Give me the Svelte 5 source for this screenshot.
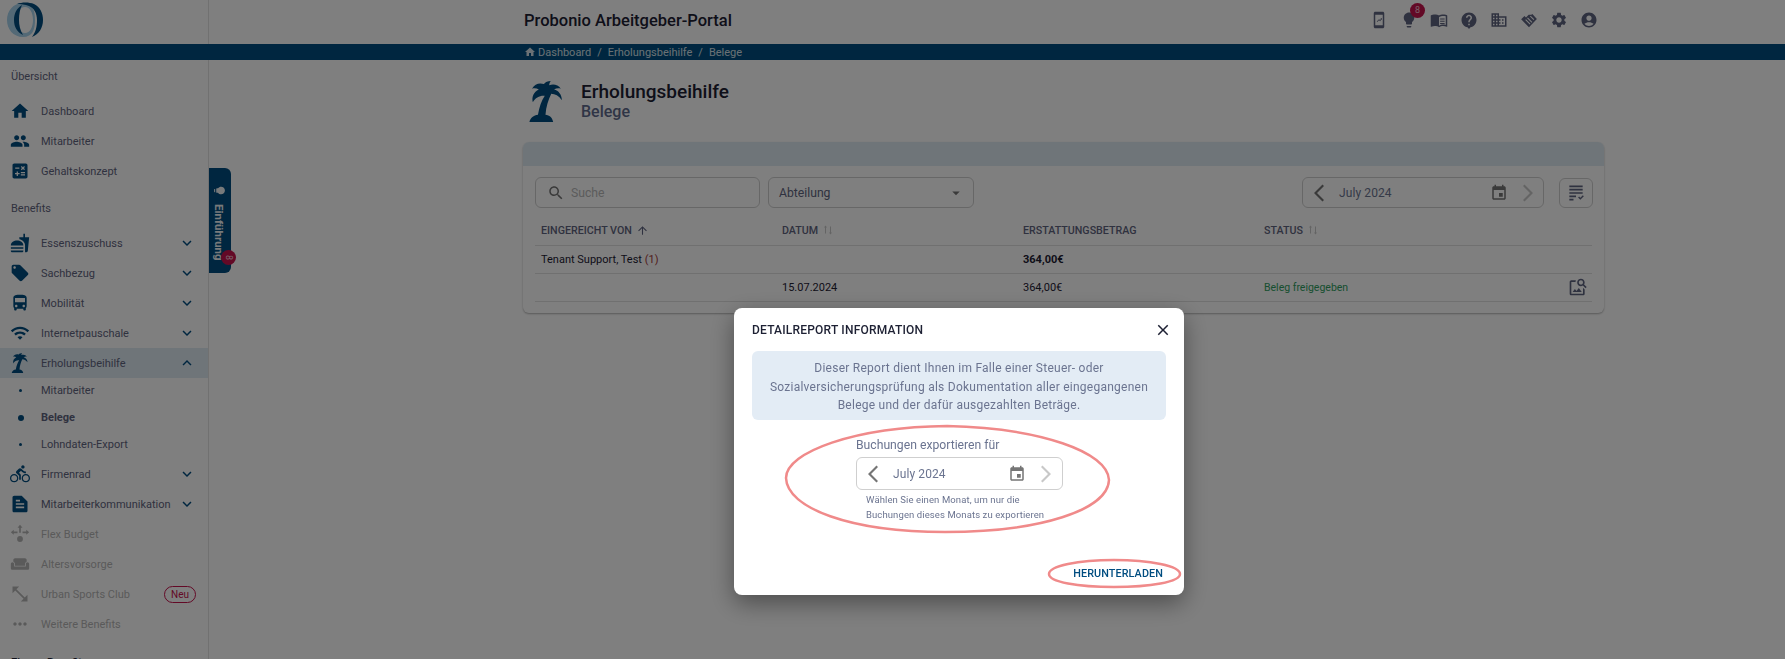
<script>
  const icons = {
    home: 'M10 20v-6h4v6h5v-8h3L12 3 2 12h3v8z',
    people: 'M16 11c1.66 0 2.99-1.34 2.99-3S17.66 5 16 5c-1.66 0-3 1.34-3 3s1.34 3 3 3zm-8 0c1.66 0 2.99-1.34 2.99-3S9.66 5 8 5C6.34 5 5 6.34 5 8s1.34 3 3 3zm0 2c-2.33 0-7 1.17-7 3.5V19h14v-2.5c0-2.33-4.67-3.5-7-3.5zm8 0c-.29 0-.62.02-.97.05 1.16.84 1.97 1.97 1.97 3.45V19h6v-2.5c0-2.33-4.67-3.5-7-3.5z',
    calc: 'M19 3H5c-1.1 0-2 .9-2 2v14c0 1.1.9 2 2 2h14c1.1 0 2-.9 2-2V5c0-1.1-.9-2-2-2zm-5.97 4.06L14.09 6l1.41 1.41L16.91 6l1.06 1.06-1.41 1.41 1.41 1.41-1.06 1.06-1.41-1.4-1.41 1.41-1.06-1.06 1.41-1.41-1.41-1.42zm-6.78.66h5v1.5h-5v-1.5zM11.5 16h-2v2H8v-2H6v-1.5h2v-2h1.5v2h2V16zm6.5 1.25h-5v-1.5h5v1.5zm0-2.5h-5v-1.5h5v1.5z',
    food: 'M18.06 22.99h1.66c.84 0 1.53-.64 1.63-1.46L23 5.05h-5V1h-1.97v4.05h-4.97l.3 2.34c1.71.47 3.31 1.32 4.27 2.26 1.44 1.42 2.43 2.89 2.43 5.29v8.05zM1 21.99V21h15.03v.99c0 .55-.45 1-1.01 1H2.01c-.56 0-1.01-.45-1.01-1zm15.03-7c0-8-15.03-8-15.03 0h15.03zM1.02 17h15v2h-15z',
    tag: 'M21.41 11.58l-9-9C12.05 2.22 11.55 2 11 2H4c-1.1 0-2 .9-2 2v7c0 .55.22 1.05.59 1.42l9 9c.36.36.86.58 1.41.58.55 0 1.05-.22 1.41-.59l7-7c.37-.36.59-.86.59-1.41 0-.55-.23-1.06-.59-1.42zM5.5 7C4.67 7 4 6.33 4 5.5S4.67 4 5.5 4 7 4.67 7 5.5 6.33 7 5.5 7z',
    bus: 'M4 16c0 .88.39 1.67 1 2.22V20c0 .55.45 1 1 1h1c.55 0 1-.45 1-1v-1h8v1c0 .55.45 1 1 1h1c.55 0 1-.45 1-1v-1.78c.61-.55 1-1.34 1-2.22V6c0-3.5-3.58-4-8-4s-8 .5-8 4v10zm3.5 1c-.83 0-1.5-.67-1.5-1.5S6.67 14 7.5 14s1.5.67 1.5 1.5S8.33 17 7.5 17zm9 0c-.83 0-1.5-.67-1.5-1.5s.67-1.5 1.5-1.5 1.5.67 1.5 1.5-.67 1.5-1.5 1.5zm1.5-6H6V6h12v5z',
    wifi: 'M1 9l2 2c4.97-4.97 13.03-4.97 18 0l2-2C16.93 2.93 7.08 2.93 1 9zm8 8l3 3 3-3c-1.65-1.66-4.34-1.66-6 0zm-4-4l2 2c2.76-2.76 7.24-2.76 10 0l2-2C15.14 9.14 8.87 9.14 5 13z',
    palm: 'M2 24c.5-2.500 2.500-4 5-4.300.8-4.300 2-8 4-11-2.800-.3-5.500 1-7 3.800-.8-3.200.5-6 3.500-7.500-1.200-.8-2.700-1-4-.5 1.500-2.700 4.300-3.700 7-2.700.8-1.300 2.300-1.600 4-1.800-.6.800-.9 1.600-.9 2.500 2.500-1 5.200-.3 6.800 2-1.500-.4-2.800-.2-4 .5 2.700.6 4.500 3 4.600 6.200-1.800-2.500-4-3.600-6.200-3.700-1.800 3.500-3 7.500-3.400 12.200 2.300.2 4 1.600 4.500 4.300z',
    bike: 'M15.5 5.5c1.1 0 2-.9 2-2s-.9-2-2-2-2 .9-2 2 .9 2 2 2zM5 12c-2.8 0-5 2.2-5 5s2.2 5 5 5 5-2.2 5-5-2.2-5-5-5zm0 8.5c-1.9 0-3.5-1.6-3.5-3.5s1.6-3.5 3.5-3.5 3.5 1.6 3.5 3.5-1.6 3.5-3.5 3.5zm5.8-10l2.4-2.4.8.8c1.3 1.3 3 2.1 5.1 2.1V9c-1.5 0-2.7-.6-3.6-1.5l-1.9-1.9c-.5-.4-1-.6-1.6-.6s-1.1.2-1.4.6L7.8 8.4c-.4.4-.6.9-.6 1.4 0 .6.2 1.1.6 1.4L11 14v5h2v-6.2l-2.2-2.3zM19 12c-2.8 0-5 2.2-5 5s2.2 5 5 5 5-2.2 5-5-2.2-5-5-5zm0 8.5c-1.9 0-3.5-1.6-3.5-3.5s1.6-3.5 3.5-3.5 3.5 1.6 3.5 3.5-1.6 3.5-3.5 3.5z',
    doc: 'M14 2H5c-1.1 0-2 .9-2 2v16c0 1.1.9 2 2 2h14c1.1 0 2-.9 2-2V9l-7-7zM7 7h5v2H7V7zm10 10H7v-2h10v2zm0-4H7v-2h10v2z',
    flex: 'M12 1l3 3.500h-2v6h-2v-6H9zM1 10l3.500-3v2h4.500v2H4.500v2zM23 10l-3.500-3v2H15v2h4.500v2zM12 14.500a3.500 3.500 0 1 0 0 7 3.500 3.500 0 0 0 0-7z',
    sofa: 'M21 10c-1.1 0-2 .9-2 2v3H5v-3c0-1.1-.9-2-2-2s-2 .9-2 2v5c0 1.1.9 2 2 2h18c1.1 0 2-.9 2-2v-5c0-1.1-.9-2-2-2zm-3-5H6c-1.1 0-2 .9-2 2v2.150c1.160.410 2 1.510 2 2.820V14h12v-2.030c0-1.300.840-2.400 2-2.820V7c0-1.100-.900-2-2-2z',
    sports: 'M3 11V3h8L7.710 6.290l10 10L21 13v8h-8l3.290-3.290-10-10z',
    more: 'M6 10c-1.1 0-2 .9-2 2s.9 2 2 2 2-.9 2-2-.9-2-2-2zm12 0c-1.1 0-2 .9-2 2s.9 2 2 2 2-.9 2-2-.9-2-2-2zm-6 0c-1.1 0-2 .9-2 2s.9 2 2 2 2-.9 2-2-.9-2-2-2z',
    down: 'M16.590 8.590L12 13.170 7.410 8.590 6 10l6 6 6-6z',
    up: 'M12 8l-6 6 1.410 1.410L12 10.830l4.590 4.580L18 14z',
    bulb: 'M9 21c0 .55.45 1 1 1h4c.55 0 1-.45 1-1v-1H9v1zm3-19C8.140 2 5 5.140 5 9c0 2.380 1.190 4.470 3 5.740V17c0 .55.45 1 1 1h6c.55 0 1-.45 1-1v-2.260c1.810-1.270 3-3.360 3-5.740 0-3.860-3.140-7-7-7z',
    book: 'M21 5c-1.110-.35-2.330-.5-3.500-.5-1.950 0-4.050.4-5.500 1.500-1.450-1.100-3.550-1.500-5.500-1.500S2.450 4.900 1 6v14.650c0 .25.25.5.5.5.1 0 .15-.05.25-.05C3.100 20.450 5.050 20 6.500 20c1.950 0 4.050.4 5.500 1.500 1.350-.85 3.800-1.500 5.500-1.500 1.650 0 3.350.3 4.750 1.050.1.05.15.05.25.05.25 0 .5-.25.5-.5V6c-.6-.45-1.250-.75-2-1zm0 13.500c-1.100-.35-2.300-.5-3.500-.5-1.700 0-4.150.65-5.500 1.500V8c1.350-.85 3.800-1.500 5.500-1.500 1.200 0 2.400.15 3.500.5v11.500zM13.500 10h6v1.300h-6zm0 3h6v1.300h-6zm0 3h6v1.300h-6z',
    help: 'M12 2C6.480 2 2 6.480 2 12c0 4.800 3.400 8.800 8 9.800L12 24l2-2.200c4.600-1 8-5 8-9.800 0-5.520-4.480-10-10-10zm1 17h-2v-2h2v2zm2.070-7.750l-.9.92C13.450 12.900 13 13.500 13 15h-2v-.5c0-1.100.45-2.100 1.170-2.830l1.240-1.260c.37-.36.59-.86.59-1.410 0-1.100-.9-2-2-2s-2 .9-2 2H8c0-2.210 1.790-4 4-4s4 1.790 4 4c0 .88-.36 1.680-.93 2.250z',
    domain: 'M12 7V3H2v18h20V7H12zM6 19H4v-2h2v2zm0-4H4v-2h2v2zm0-4H4V9h2v2zm0-4H4V5h2v2zm4 12H8v-2h2v2zm0-4H8v-2h2v2zm0-4H8V9h2v2zm0-4H8V5h2v2zm10 12h-8v-2h2v-2h-2v-2h2v-2h-2V9h8v10zm-2-8h-2v2h2v-2zm0 4h-2v2h2v-2z',
    shake: 'M12 21.500L1.500 11 6 6.500l2 2 3.500-3.500H15l1.500-1 6 6.500zM9.500 9.500l6 6 1-1-6-6zm-2.500 2.500l6 6 1-1-6-6zm6-5l5 5 1-1-4.500-4.500z',
    gear: 'M19.140 12.940c.04-.3.06-.61.06-.94 0-.32-.02-.64-.07-.94l2.030-1.580c.18-.14.23-.41.12-.61l-1.920-3.320c-.12-.22-.37-.29-.59-.22l-2.390.96c-.5-.38-1.030-.7-1.620-.94l-.36-2.540c-.04-.24-.24-.41-.48-.41h-3.840c-.24 0-.43.17-.47.41l-.36 2.540c-.59.24-1.130.57-1.620.94l-2.390-.96c-.22-.08-.47 0-.59.22L2.740 8.870c-.12.21-.08.47.12.61l2.030 1.580c-.05.3-.09.63-.09.94s.02.64.07.94l-2.030 1.580c-.18.14-.23.41-.12.61l1.920 3.320c.12.22.37.29.59.22l2.390-.96c.5.38 1.030.7 1.620.94l.36 2.540c.05.24.24.41.48.41h3.840c.24 0 .44-.17.47-.41l.36-2.540c.59-.24 1.130-.56 1.620-.94l2.390.96c.22.08.47 0 .59-.22l1.920-3.320c.12-.22.07-.47-.12-.61l-2.010-1.580zM12 15.600c-1.980 0-3.600-1.620-3.600-3.600s1.620-3.600 3.600-3.600 3.600 1.620 3.600 3.600-1.620 3.600-3.600 3.600z',
    account: 'M12 2C6.480 2 2 6.480 2 12s4.480 10 10 10 10-4.480 10-10S17.520 2 12 2zm0 4c1.930 0 3.500 1.570 3.500 3.500S13.930 13 12 13s-3.500-1.570-3.500-3.500S10.070 6 12 6zm0 14c-2.030 0-4.430-.82-6.140-2.880C7.550 15.800 9.680 15 12 15s4.450.8 6.140 2.120C16.430 19.180 14.030 20 12 20z',
    phone: 'M17 1.010L7 1c-1.100 0-2 .9-2 2v18c0 1.100.9 2 2 2h10c1.100 0 2-.9 2-2V3c0-1.100-.9-1.990-2-1.990zM17 19H7V5h10v14zM9 14l3-3 1.500 1 1.500-2h-1.500v-.5H16V12h-.5v-1.200L13.600 13.500 12 12.400 9.700 14.700z',
    search: 'M15.500 14h-.79l-.28-.27C15.410 12.590 16 11.110 16 9.500 16 5.910 13.090 3 9.500 3S3 5.910 3 9.500 5.910 16 9.500 16c1.610 0 3.090-.59 4.230-1.570l.27.28v.79l5 4.990L20.490 19l-4.990-5zm-6 0C7.010 14 5 11.990 5 9.500S7.010 5 9.500 5 14 7.010 14 9.500 11.990 14 9.500 14z',
    event: 'M17 12h-5v5h5v-5zM16 1v2H8V1H6v2H5c-1.110 0-1.990.9-1.990 2L3 19c0 1.100.89 2 2 2h14c1.100 0 2-.9 2-2V5c0-1.100-.9-2-2-2h-1V1h-2zm3 18H5V8h14v11z',
    arrowUp: 'M4 12l1.410 1.410L11 7.830V20h2V7.830l5.580 5.590L20 12l-8-8-8 8z',
    close: 'M19 6.410L17.590 5 12 10.590 6.410 5 5 6.410 10.590 12 5 17.590 6.410 19 12 13.410 17.590 19 19 17.590 13.410 12z',
    checklist: 'M4 3h16v2H4zm0 4h16v2H4zm0 4h16v2H4zm0 4h8v2H4zm0 4h5v2H4zm10.500-1.500l1.200-1.200 1.500 1.500 3-3 1.200 1.200-4.200 4.200z',
    imageSearch: 'M18 13v7H4V6h5.020c.05-.71.22-1.380.48-2H4c-1.100 0-2 .9-2 2v14c0 1.100.9 2 2 2h14c1.100 0 2-.9 2-2v-5l-2-2zm-1.500 5h-11l2.750-3.530 1.960 2.360 2.750-3.540zm2.800-9.110c.44-.7.7-1.510.7-2.390C20 4.010 17.990 2 15.500 2S11 4.010 11 6.500s2.010 4.500 4.490 4.500c.88 0 1.700-.26 2.390-.7L21 13.420 22.420 12 19.300 8.890zM15.500 9C14.120 9 13 7.880 13 6.500S14.120 4 15.500 4 18 5.120 18 6.500 16.880 9 15.500 9z',
    sortBoth: 'M7 3l3 4H8v12H6V7H4zM17 21l-3-4h2V5h2v12h2z',
    caret: 'M7 10l5 5 5-5z',
    prev: 'M15.500 3.500L7 12l8.500 8.500 1.500-1.500-7-7 7-7z',
    next: 'M8.500 3.500L17 12l-8.500 8.500L7 19l7-7-7-7z'
  }

  const overview = [
    { label: 'Dashboard', icon: 'home' },
    { label: 'Mitarbeiter', icon: 'people' },
    { label: 'Gehaltskonzept', icon: 'calc' }
  ]

  const benefitsTop = [
    { label: 'Essenszuschuss', icon: 'food', chevron: 'down' },
    { label: 'Sachbezug', icon: 'tag', chevron: 'down' },
    { label: 'Mobilität', icon: 'bus', chevron: 'down' },
    { label: 'Internetpauschale', icon: 'wifi', chevron: 'down' },
    { label: 'Erholungsbeihilfe', icon: 'palm', chevron: 'up', active: true }
  ]

  const subItems = [
    { label: 'Mitarbeiter' },
    { label: 'Belege', current: true },
    { label: 'Lohndaten-Export' }
  ]

  const benefitsBottom = [
    { label: 'Firmenrad', icon: 'bike', chevron: 'down' },
    { label: 'Mitarbeiterkommunikation', icon: 'doc', chevron: 'down' },
    { label: 'Flex Budget', icon: 'flex', off: true },
    { label: 'Altersvorsorge', icon: 'sofa', off: true },
    { label: 'Urban Sports Club', icon: 'sports', off: true, isNew: true },
    { label: 'Weitere Benefits', icon: 'more', off: true }
  ]

  const topIcons = ['phone', 'bulb', 'book', 'help', 'domain', 'shake', 'gear', 'account']
</script>

{#snippet icon(name, size = 24)}
  <svg class="icon" width={size} height={size} viewBox="0 0 24 24" fill="currentColor" aria-hidden="true">
    <path d={icons[name]} fill-rule="evenodd" />
  </svg>
{/snippet}

{#snippet navItem(item)}
  <div class="nav-item" class:active={item.active} class:off={item.off}>
    <span class="nav-icon">{@render icon(item.icon, 20)}</span>
    <span class="nav-label">{item.label}</span>
    {#if item.isNew}<span class="new">Neu</span>{/if}
    {#if item.chevron}<span class="nav-chevron">{@render icon(item.chevron, 18)}</span>{/if}
  </div>
{/snippet}

{#snippet monthPicker()}
  <div class="picker">
    <span class="prev">{@render icon('prev', 24)}</span>
    <span class="month">July 2024</span>
    <span class="cal">{@render icon('event', 18)}</span>
    <span class="next">{@render icon('next', 24)}</span>
  </div>
{/snippet}

<div class="page">
  <aside class="sidebar">
    <div class="logo">
      <svg width="40" height="38" viewBox="0 0 40 38" aria-hidden="true">
        <path d="M18 2C8 2 2 10 2 19s6 17 16 17 12-8 12-17S28 2 18 2zm2 4c5 0 8 6 8 13s-3 13-8 13-9-6-9-13 4-13 9-13z" fill="#a6d2ec" fill-rule="evenodd" />
        <path d="M12 3C17 1 24 1 29 3 35 6 38 12 38 19 38 27 34 33 27 36 31 31 32 25 32 19 32 12 29 7 24 5 20 3.500 16 3 12 3z" fill="#004d80" />
        <path d="M17 4C12 7 9 12 9 19 9 26 12 31 18 34 15 29 14 24 14 19 14 13 15 8 17 4z" fill="#004d80" />
      </svg>
    </div>
    <div class="side-bar-strip"></div>
    <div class="section first">Übersicht</div>
    {#each overview as item}
      {@render navItem(item)}
    {/each}
    <div class="section second">Benefits</div>
    {#each benefitsTop as item}
      {@render navItem(item)}
    {/each}
    {#each subItems as sub}
      <div class="sub-item" class:current={sub.current}>
        <span class="dot-wrap"><span class="dot"></span></span>
        <span>{sub.label}</span>
      </div>
    {/each}
    {#each benefitsBottom as item}
      {@render navItem(item)}
    {/each}
    <div class="section third">Eigene Benefits</div>
  </aside>

  <div class="main">
    <header class="topbar">
      <div class="brand">Probonio Arbeitgeber-Portal</div>
      <div class="top-icons">
        {#each topIcons as name}
          <span class="top-icon">
            {@render icon(name, 18)}
            {#if name === 'bulb'}<span class="bulb-badge">8</span>{/if}
          </span>
        {/each}
      </div>
    </header>
    <nav class="crumbs">
      <span class="crumb-home">{@render icon('home', 12)}</span>
      <span>Dashboard</span><span class="sep">/</span><span>Erholungsbeihilfe</span><span class="sep">/</span><span>Belege</span>
    </nav>

    <div class="content">
      <div class="title-row">
        <span class="title-icon">{@render icon('palm', 41)}</span>
        <div>
          <h1>Erholungsbeihilfe</h1>
          <h2>Belege</h2>
        </div>
      </div>

      <section class="card">
        <div class="card-head"></div>
        <div class="filters">
          <div class="field search">
            <span class="search-icon">{@render icon('search', 18)}</span>
            <span class="placeholder">Suche</span>
          </div>
          <div class="field select">
            <span>Abteilung</span>
            <span class="caret">{@render icon('caret', 18)}</span>
          </div>
          <div class="spacer"></div>
          <div class="picker-wide">{@render monthPicker()}</div>
          <div class="list-btn">{@render icon('checklist', 20)}</div>
        </div>

        <div class="table">
          <div class="row head">
            <div>EINGEREICHT VON <span class="sort strong">{@render icon('arrowUp', 13)}</span></div>
            <div>DATUM <span class="sort">{@render icon('sortBoth', 12)}</span></div>
            <div>ERSTATTUNGSBETRAG</div>
            <div>STATUS <span class="sort">{@render icon('sortBoth', 12)}</span></div>
          </div>
          <div class="row">
            <div>Tenant Support, Test <span class="count">(1)</span></div>
            <div></div>
            <div class="bold">364,00€</div>
            <div></div>
          </div>
          <div class="row">
            <div></div>
            <div>15.07.2024</div>
            <div>364,00€</div>
            <div class="ok">Beleg freigegeben</div>
            <span class="row-action">{@render icon('imageSearch', 20)}</span>
          </div>
        </div>
      </section>
    </div>
  </div>

  <button class="tour" type="button">
    <span class="tour-inner">
      <span class="tour-bulb">{@render icon('bulb', 13)}</span>
      <span>Einführung</span>
    </span>
    <span class="tour-badge">8</span>
  </button>
</div>

<div class="backdrop"></div>

<div class="dialog" role="dialog">
  <div class="dialog-head">
    <span class="dialog-title">DETAILREPORT INFORMATION</span>
    <span class="dialog-close">{@render icon('close', 18)}</span>
  </div>
  <div class="info">
    Dieser Report dient Ihnen im Falle einer Steuer- oder<br />
    Sozialversicherungsprüfung als Dokumentation aller eingegangenen<br />
    Belege und der dafür ausgezahlten Beträge.
  </div>
  <div class="export">
    <div class="export-label">Buchungen exportieren für</div>
    {@render monthPicker()}
    <div class="hint">Wählen Sie einen Monat, um nur die<br />Buchungen dieses Monats zu exportieren</div>
  </div>
  <div class="dialog-foot">
    <span class="download">HERUNTERLADEN</span>
  </div>
</div>

<!-- rote Markierungen aus dem Screenshot -->
<svg class="marks" width="1785" height="659" aria-hidden="true">
  <path d="M947 426C1040 428 1108 452 1109 480 1108 510 1040 532 945 532 850 532 787 508 786 478 786 452 855 427 947 426z" />
  <path d="M1114 560C1150 560 1180 566 1180 574 1180 582 1150 587 1114 587 1078 587 1049 582 1049 574 1049 566 1078 560 1114 560z" />
</svg>

<style>
  :global(body) {
    margin: 0;
    overflow: hidden;
    background: #fff;
  }

  .page,
  .dialog {
    font-family: Roboto, 'Noto Sans', sans-serif;
  }

  .page {
    position: relative;
    display: flex;
    height: 659px;
    overflow: hidden;
    background: #fff;
    color: #2e3550;
  }

  .icon {
    display: block;
  }

  /* sidebar */
  .sidebar {
    flex: 0 0 208px;
    height: 659px;
    overflow: hidden;
    border-right: 1px solid #e2e2e2;
    font-size: 11px;
    color: #5f6480;
  }

  .logo {
    height: 44px;
    padding: 1px 0 0 5px;
    box-sizing: border-box;
  }

  .side-bar-strip {
    height: 16px;
    background: #004d80;
  }

  .section {
    font-size: 11px;
    line-height: 14px;
    padding-left: 11px;
    color: #5f6480;
  }

  .section.first {
    margin-top: 10px;
    margin-bottom: 12px;
  }

  .section.second {
    margin-top: 16px;
    margin-bottom: 12px;
  }

  .section.third {
    margin-top: 17px;
    font-weight: 500;
    color: #1d2033;
  }

  .nav-item {
    display: flex;
    align-items: center;
    height: 30px;
    padding-left: 10px;
    padding-right: 12px;
  }

  .nav-item.active {
    background: #dfeaf2;
  }

  .nav-icon {
    flex: 0 0 31px;
    color: #004d80;
  }

  .nav-label {
    flex: 1;
    white-space: nowrap;
  }

  .nav-chevron {
    color: #004d80;
  }

  .nav-item.off .nav-icon,
  .nav-item.off .nav-label {
    color: #b5b5b5;
  }

  .new {
    border: 1px solid #c7134d;
    border-radius: 9px;
    color: #c7134d;
    font-size: 10px;
    line-height: 15px;
    padding: 0 6px;
  }

  .sub-item {
    display: flex;
    align-items: center;
    box-sizing: border-box;
    height: 27px;
    padding: 0 0 2px 10px;
  }

  .sub-item.current {
    font-weight: 700;
  }

  .dot-wrap {
    flex: 0 0 31px;
    display: flex;
    justify-content: center;
    padding-right: 10px;
    box-sizing: border-box;
  }

  .dot {
    width: 3px;
    height: 3px;
    border-radius: 50%;
    background: #004d80;
  }

  .current .dot {
    width: 6px;
    height: 6px;
  }

  /* top */
  .main {
    flex: 1;
    min-width: 0;
    margin-left: -1px;
  }

  .topbar {
    display: flex;
    align-items: center;
    justify-content: space-between;
    box-sizing: border-box;
    height: 44px;
    padding: 0 186px 4px 316px;
    position: relative;
  }

  .brand {
    font-size: 16.500px;
    font-weight: 500;
    color: #1d2033;
  }

  .top-icons {
    display: flex;
    gap: 10px;
    color: #5f6480;
  }

  .top-icon {
    position: relative;
    width: 20px;
    display: flex;
    justify-content: center;
  }

  .bulb-badge {
    position: absolute;
    top: -8px;
    right: -6px;
    width: 15px;
    height: 15px;
    border-radius: 50%;
    background: #c7134d;
    color: #f2c4d4;
    font-size: 9px;
    line-height: 15px;
    text-align: center;
  }

  .crumbs {
    position: relative;
    display: flex;
    align-items: center;
    height: 16px;
    padding-left: 316px;
    background: #004d80;
    color: #d6e2ea;
    font-size: 11px;
  }

  .crumb-home {
    margin-right: 2px;
  }

  .sep {
    margin: 0 6px;
  }

  /* content */
  .content {
    padding: 0 181px 0 315px;
  }

  .title-row {
    display: flex;
    align-items: center;
    height: 82px;
    gap: 14px;
    padding-left: 3px;
  }

  .title-icon {
    color: #004d80;
  }

  h1,
  h2 {
    margin: 0;
    font-weight: 500;
  }

  h1 {
    font-size: 19px;
    line-height: 21px;
    color: #1d2033;
  }

  h2 {
    font-size: 16px;
    line-height: 19px;
    color: #5f6a8c;
  }

  .card {
    height: 171px;
    border-radius: 6px;
    box-shadow: 0 1px 2px rgba(0, 0, 0, 0.3);
    overflow: hidden;
  }

  .card-head {
    height: 24px;
    background: #dfeaf2;
  }

  .filters {
    display: flex;
    align-items: flex-start;
    gap: 8px;
    padding: 11px 11px 0 12px;
    height: 30px;
  }

  .field {
    display: flex;
    align-items: center;
    box-sizing: border-box;
    height: 31px;
    border: 1px solid #cfcfcf;
    border-radius: 6px;
    font-size: 12.200px;
    color: #5f6480;
  }

  .search {
    width: 225px;
    padding-left: 11px;
    gap: 6px;
  }

  .search-icon {
    color: #757575;
  }

  .placeholder {
    color: #b8b8b8;
  }

  .select {
    width: 206px;
    padding: 0 8px 0 10px;
    justify-content: space-between;
  }

  .caret {
    color: #757575;
  }

  .spacer {
    flex: 1;
  }

  .picker-wide {
    width: 242px;
  }

  .picker-wide .picker {
    height: 31px;
    padding-right: 3px;
  }

  .list-btn {
    box-sizing: border-box;
    width: 34px;
    height: 30px;
    margin: 1px 0 0 7px;
    display: flex;
    align-items: center;
    justify-content: center;
    border: 1px solid #cfcfcf;
    border-radius: 6px;
    color: #5f6480;
  }

  .picker {
    box-sizing: border-box;
    display: flex;
    align-items: center;
    height: 33px;
    border: 1px solid #cfcfcf;
    border-radius: 6px;
    font-size: 12px;
    color: #6b7490;
    padding: 0 4px 0 4px;
  }

  .prev {
    color: #757575;
  }

  .month {
    flex: 1;
    padding-left: 8px;
    letter-spacing: 0.1px;
  }

  .cal {
    color: #757575;
    margin-right: 8px;
  }

  .next {
    color: #c8c8c8;
  }

  .table {
    margin: 0 12px;
    font-size: 11px;
    color: #1d2033;
  }

  .row {
    position: relative;
    display: grid;
    grid-template-columns: 241px 241px 241px 1fr;
    align-items: center;
    height: 28px;
    padding-left: 6px;
    border-bottom: 1px solid #e0e0e0;
    box-sizing: border-box;
  }

  .row.head {
    height: 39px;
    padding-top: 8px;
    font-size: 10.700px;
    font-weight: 500;
    color: #5f6480;
  }

  .row.head > div {
    display: flex;
    align-items: center;
    gap: 4px;
  }

  .sort {
    color: #c8c8c8;
  }

  .sort.strong {
    color: #5f6480;
  }

  .count {
    color: #a33a3a;
  }

  .bold {
    font-weight: 700;
  }

  .ok {
    color: #2e9e5f;
    font-size: 10.500px;
  }

  .row-action {
    position: absolute;
    right: 4px;
    top: 3px;
    color: #5f6480;
  }

  /* tab */
  .tour {
    position: absolute;
    left: 209px;
    top: 168px;
    width: 22px;
    height: 105px;
    padding: 0;
    border: 0;
    background: #004d80;
    border-radius: 0 6px 6px 0;
    color: #f0f4f7;
    font-family: inherit;
    font-size: 11.500px;
    font-weight: 700;
  }

  .tour-inner {
    position: absolute;
    left: 3px;
    top: 16px;
    display: flex;
    align-items: center;
    gap: 7px;
    writing-mode: vertical-rl;
  }

  .tour-bulb {
    transform: rotate(90deg);
  }

  .tour-badge {
    position: absolute;
    left: 12px;
    top: 82px;
    width: 15px;
    height: 15px;
    border-radius: 50%;
    background: #c7134d;
    color: #f2c4d4;
    font-size: 9px;
    font-weight: 400;
    line-height: 15px;
    text-align: center;
    transform: rotate(90deg);
  }

  /* dialog */
  .backdrop {
    position: fixed;
    inset: 0;
    background: rgba(0, 0, 0, 0.5);
  }

  .dialog {
    position: fixed;
    left: 734px;
    top: 308px;
    width: 450px;
    height: 287px;
    box-sizing: border-box;
    padding: 0 18px;
    background: #fff;
    border-radius: 8px;
    box-shadow: 0 8px 24px rgba(0, 0, 0, 0.4);
    display: flex;
    flex-direction: column;
  }

  .dialog-head {
    display: flex;
    align-items: center;
    justify-content: space-between;
    height: 43px;
  }

  .dialog-title {
    font-size: 12px;
    font-weight: 500;
    letter-spacing: 0.2px;
    color: #1d2033;
  }

  .dialog-close {
    color: #1d2033;
    margin-right: -6px;
  }

  .info {
    box-sizing: border-box;
    height: 69px;
    padding-top: 8px;
    border-radius: 6px;
    background: #e3ecf5;
    color: #6b7490;
    font-size: 12px;
    line-height: 18.500px;
    letter-spacing: 0.25px;
    text-align: center;
  }

  .export {
    width: 207px;
    margin: 16px 0 0 104px;
  }

  .export-label {
    font-size: 12.200px;
    line-height: 18px;
    margin-bottom: 3px;
    color: #6b7490;
    white-space: nowrap;
  }

  .hint {
    margin: 2px 0 0 10px;
    font-size: 9.500px;
    line-height: 15px;
    letter-spacing: 0.1px;
    color: #6b7490;
    white-space: nowrap;
  }

  .dialog-foot {
    margin-top: auto;
    height: 43px;
    display: flex;
    align-items: flex-start;
    justify-content: flex-end;
  }

  .download {
    font-size: 10.800px;
    font-weight: 500;
    letter-spacing: 0.1px;
    color: #004d80;
    margin-right: 3px;
    margin-top: 15px;
  }

  .marks {
    position: fixed;
    left: 0;
    top: 0;
    pointer-events: none;
  }

  .marks path {
    fill: none;
    stroke: #f08a8a;
    stroke-width: 2.500;
  }
</style>
